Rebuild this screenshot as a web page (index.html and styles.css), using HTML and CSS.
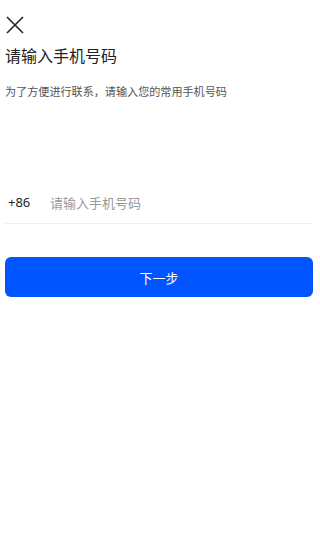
FILE: index.html
```html
<!DOCTYPE html>
<html lang="zh-CN">
<head>
    <meta charset="UTF-8">
    <meta name="viewport" content="width=device-width, initial-scale=1.0">
    <title>请输入手机号码</title>
    <link rel="stylesheet" href="styles.css">
</head>
<body>
    <div class="page">
        <div class="close-btn">
            <svg width="18" height="18" viewBox="0 0 18 18">
                <path d="M1 1 L17 17 M17 1 L1 17" stroke="#222" stroke-width="1.6" fill="none"/>
            </svg>
        </div>

        <h1>请输入手机号码</h1>
        <p class="tip">为了方便进行联系，请输入您的常用手机号码</p>

        <div class="phone-row">
            <span class="area-code">+86</span>
            <input type="tel" placeholder="请输入手机号码">
        </div>

        <button type="button" class="next-btn">下一步</button>
    </div>
</body>
</html>
```

FILE: styles.css
```css
* {
    margin: 0;
    padding: 0;
    box-sizing: border-box;
}

body {
    font-family: "Noto Sans CJK SC", "Noto Sans", sans-serif;
    background: #fff;
    color: #222;
}

.page {
    padding: 0 7px 0 5px;
}

.close-btn {
    padding: 15px 0 0 1px;
    height: 33px;
}

h1 {
    font-size: 16px;
    font-weight: 400;
    color: #222;
    margin-top: 11px;
    line-height: 22px;
}

.tip {
    font-size: 11.1px;
    color: #555;
    margin-top: 17px;
    line-height: 16px;
}

.phone-row {
    display: flex;
    align-items: center;
    margin-top: 82px;
    height: 43px;
    border-bottom: 1px solid #f0f0f0;
}

.area-code {
    font-size: 13px;
    color: #222;
    width: 45px;
    padding-left: 3px;
    font-family: "Noto Sans", sans-serif;
}

.phone-row input {
    flex: 1;
    border: none;
    outline: none;
    font-size: 13px;
    font-family: "Noto Sans CJK SC", sans-serif;
    color: #222;
    background: transparent;
}

.phone-row input::placeholder {
    color: #999;
}

.next-btn {
    display: block;
    width: 100%;
    height: 40px;
    margin-top: 33px;
    background: #0055ff;
    color: #fff;
    border: none;
    border-radius: 6px;
    font-size: 13px;
    font-family: "Noto Sans CJK SC", sans-serif;
}
```
